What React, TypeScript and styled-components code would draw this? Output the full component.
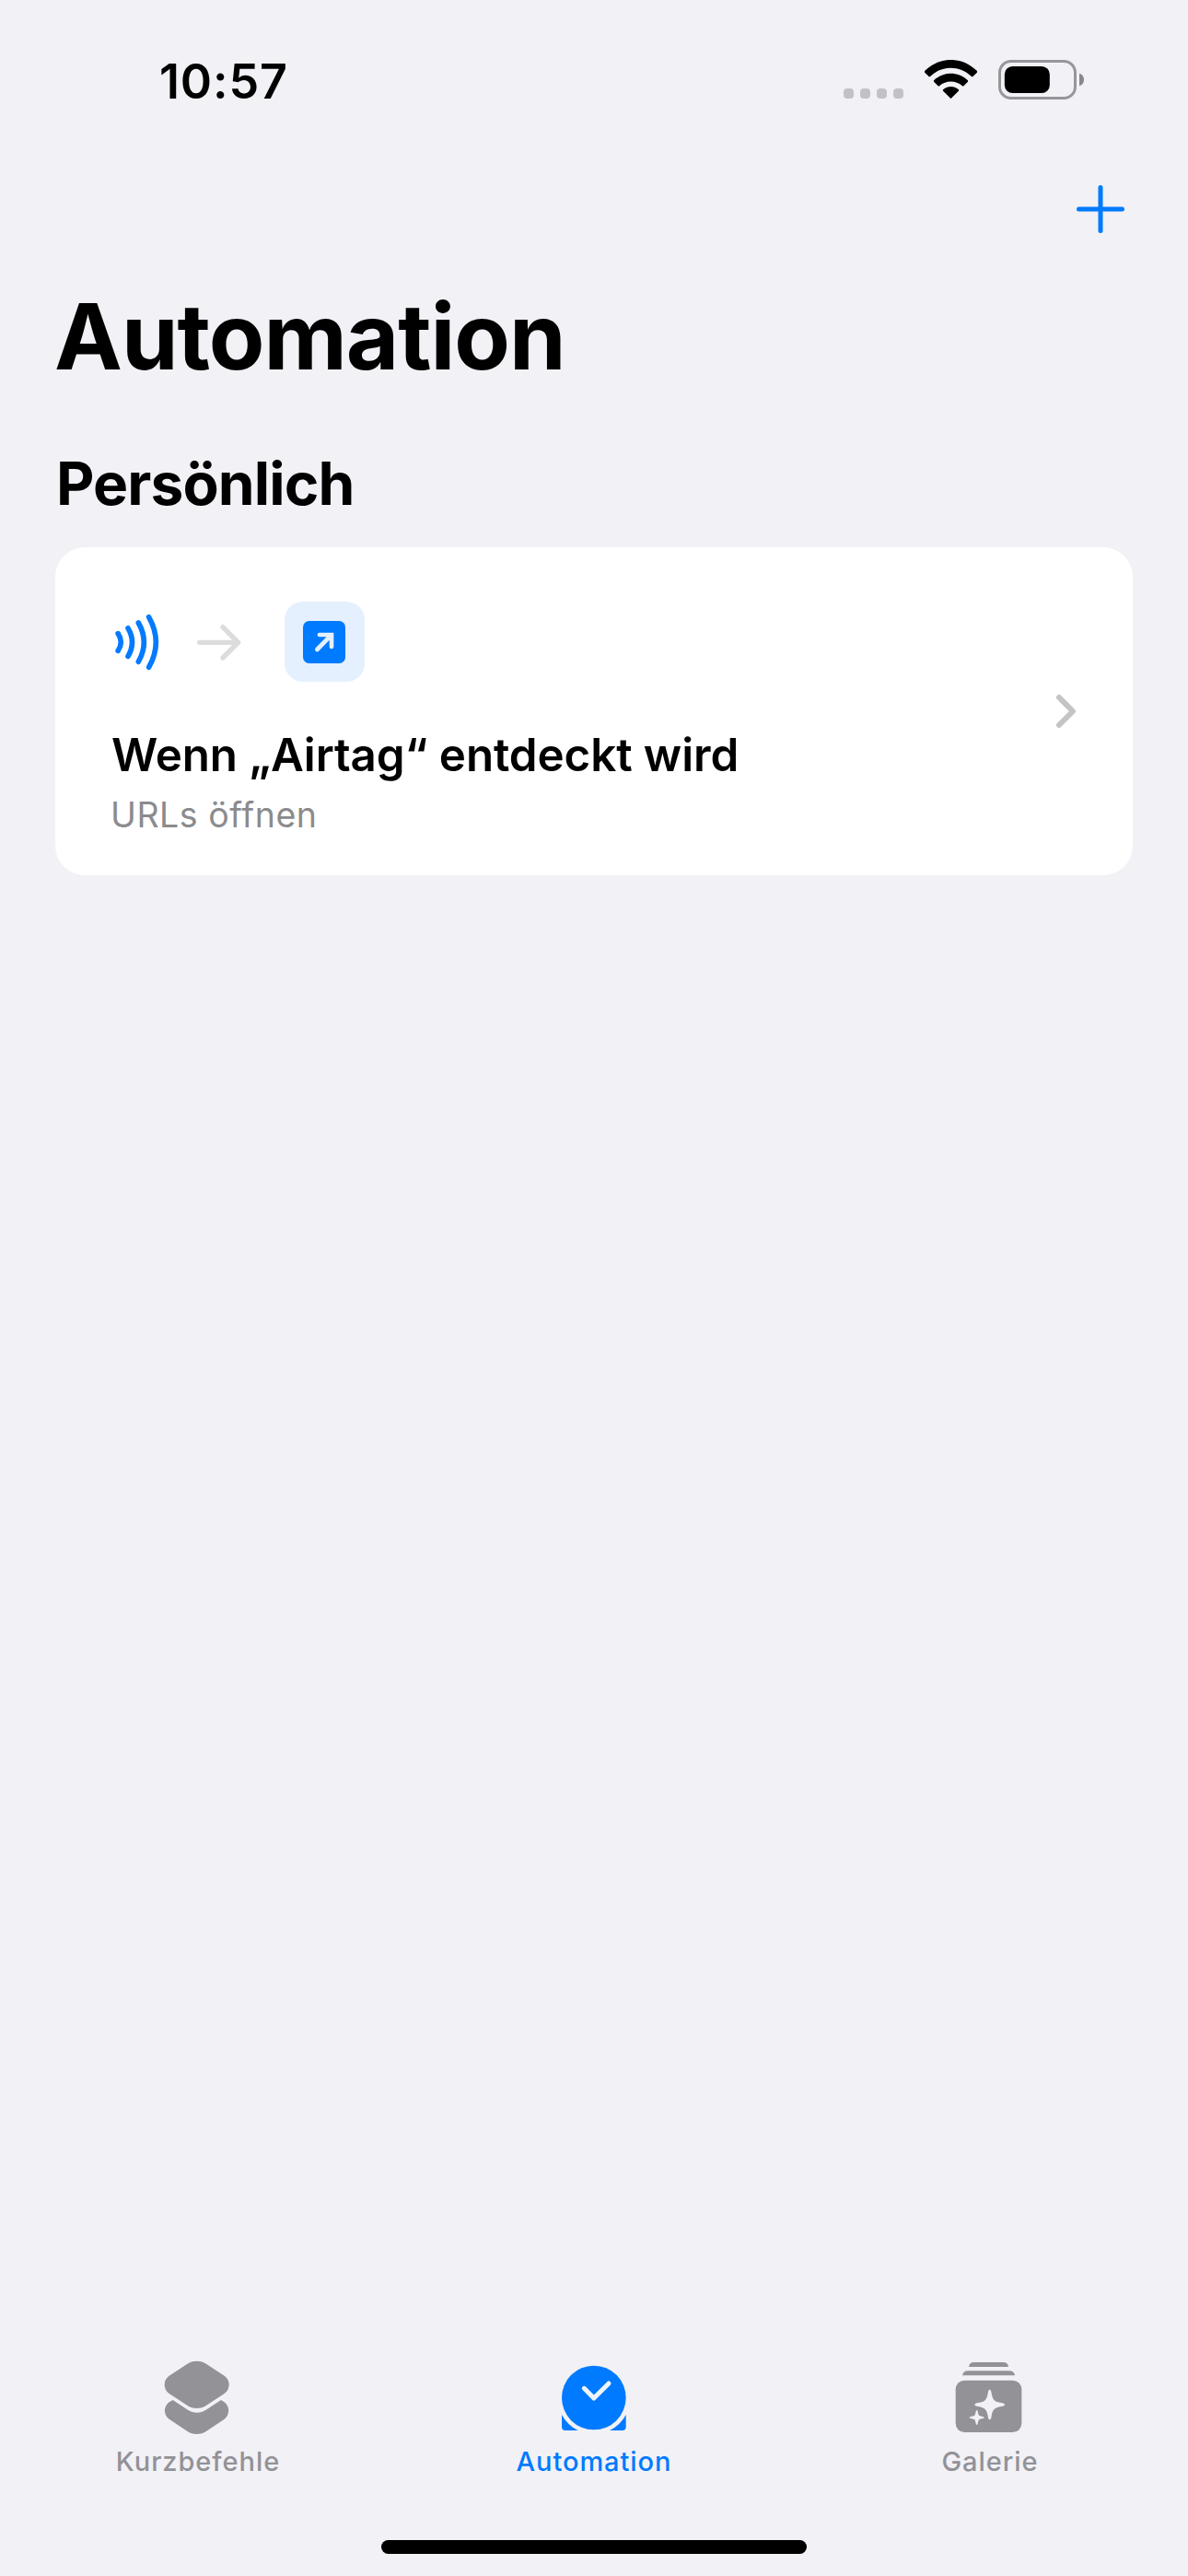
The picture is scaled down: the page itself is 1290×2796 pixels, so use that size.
import React from "react";
import styled, { createGlobalStyle } from "styled-components";

const BLUE = "#007aff";
const GRAY = "#929297";
const BG = "#f1f1f6";

const GlobalStyle = createGlobalStyle`
  * { box-sizing: border-box; }
  body {
    margin: 0;
    background: ${BG};
    font-family: Inter, "Liberation Sans", sans-serif;
    color: #000;
  }
  svg { display: block; }
`;

const Screen = styled.div`
  display: flex;
  flex-direction: column;
  width: 1290px;
  height: 2796px;
  background: ${BG};
`;

const StatusBar = styled.header`
  display: flex;
  align-items: center;
  justify-content: space-between;
  height: 173px;
  padding: 0 113px 0 173px;
`;

const Clock = styled.time`
  padding-top: 5px;
  font-size: 52px;
  line-height: 64px;
  font-weight: 600;
  letter-spacing: 0.85px;
`;

const StatusIcons = styled.div`
  display: flex;
  align-items: flex-end;
  gap: 23px;
  height: 43px;
`;

const SignalDots = styled.div`
  display: flex;
  gap: 7px;
  padding-bottom: 1px;
`;

const Dot = styled.span`
  width: 11px;
  height: 11px;
  border-radius: 4px;
  background: #c1c1c6;
`;

const WifiIcon = styled.svg`
  width: 57px;
  height: 42px;
  margin-bottom: 1px;
`;

const BatteryIcon = styled.svg`
  width: 93px;
  height: 43px;
`;

const NavBar = styled.nav`
  display: flex;
  align-items: center;
  justify-content: flex-end;
  height: 107px;
  padding-right: 69px;
`;

const AddButton = styled.button`
  padding: 0;
  border: 0;
  background: none;
`;

const Content = styled.main`
  flex: 1;
  padding: 25px 60px 0;
`;

const PageTitle = styled.h1`
  margin: 0 0 0 -1px;
  font-size: 99px;
  line-height: 120px;
  font-weight: 700;
  letter-spacing: -1.03px;
`;

const SectionTitle = styled.h2`
  margin: 61px 0 30px 1px;
  font-size: 64px;
  line-height: 78px;
  font-weight: 700;
  letter-spacing: -0.87px;
`;

const Card = styled.article`
  display: flex;
  align-items: center;
  justify-content: space-between;
  height: 356px;
  padding: 0 61px 0 60px;
  border-radius: 32px;
  background: #fff;
`;

const CardBody = styled.div`
  display: flex;
  flex-direction: column;
  padding-top: 17px;
`;

const FlowRow = styled.div`
  display: flex;
  align-items: center;
  height: 87px;
  margin-bottom: 48px;
`;

const FlowIcon = styled.svg`
  width: 189px;
  height: 87px;
`;

const ActionTile = styled.div`
  display: grid;
  place-items: center start;
  width: 87px;
  height: 87px;
  padding-left: 20px;
  border-radius: 20px;
  background: #e5f0fe;
`;

const CardTitle = styled.h3`
  margin: 0 0 11px 1px;
  font-size: 49.3px;
  line-height: 62px;
  font-weight: 600;
  letter-spacing: -0.08px;
`;

const CardSubtitle = styled.p`
  margin: 0 0 -1px;
  font-size: 37.5px;
  line-height: 48px;
  letter-spacing: 0.54px;
  color: #8b8b8d;
`;

const Chevron = styled.svg`
  width: 24px;
  height: 40px;
`;

const TabBar = styled.footer`
  display: grid;
  grid-template-columns: repeat(3, 1fr);
  height: 207px;
  padding-top: 10px;
`;

const Tab = styled.a<{ $active?: boolean }>`
  display: flex;
  flex-direction: column;
  align-items: center;
  gap: 10px;
  color: ${(p) => (p.$active ? BLUE : GRAY)};
`;

const TabIcon = styled.svg`
  width: 80px;
  height: 84px;
`;

const TabLabel = styled.span`
  font-size: 29px;
  line-height: 36px;
  font-weight: 450;
  letter-spacing: 0.95px;
`;

const HomeIndicator = styled.div`
  align-self: center;
  width: 462px;
  height: 15px;
  margin-bottom: 24px;
  border-radius: 8px;
  background: #000;
`;

export default function App() {
  return (
    <Screen>
      <GlobalStyle />
      <StatusBar>
        <Clock>10:57</Clock>
        <StatusIcons>
          <SignalDots>
            <Dot />
            <Dot />
            <Dot />
            <Dot />
          </SignalDots>
          <WifiIcon viewBox="342 75 171 126">
            <path d="M343 117Q340 113 343 110C392 63 462 63 512 110Q515 113 512 117L500 128Q497 131 494 128C456 92 398 92 361 128Q358 131 355 128Z" />
            <path d="M373 147Q370 144 373 141C404 112 450 112 482 141Q485 144 482 147L470 159Q467 162 464 159C444 141 411 141 391 159Q388 162 385 159Z" />
            <path d="M403 177Q400 174 403 171C417 159 438 159 452 171Q455 174 452 177L430 199Q427.5 202 425 199Z" />
          </WifiIcon>
          <BatteryIcon viewBox="582 75 279 129">
            <rect x="586.5" y="79.5" width="246" height="120" rx="37" fill="none" stroke="#97979b" strokeWidth="9" />
            <rect x="602.5" y="96" width="147" height="87" rx="26" />
            <path d="M846 119C856 122 861 130 861 139.5C861 149 856 157 846 160Z" fill="#88888b" />
          </BatteryIcon>
        </StatusIcons>
      </StatusBar>

      <NavBar>
        <AddButton aria-label="Hinzufügen">
          <svg width="52" height="52" viewBox="0 0 52 52" fill="none" stroke={BLUE} strokeWidth="5" strokeLinecap="round">
            <path d="M26 2.5V49.5M2.5 26H49.5" />
          </svg>
        </AddButton>
      </NavBar>

      <Content>
        <PageTitle>Automation</PageTitle>
        <SectionTitle>Persönlich</SectionTitle>
        <Card>
          <CardBody>
            <FlowRow>
              <FlowIcon viewBox="240 219 567 261" fill="none" strokeLinecap="round" strokeLinejoin="round">
                <g stroke="#047aff" strokeWidth="17">
                  <path d="M264.500 323Q283.500 351 264.500 379" />
                  <path d="M297 305.500Q324 351 297 397" />
                  <path d="M331 288Q367 351 331 414.500" />
                  <path d="M365 269.500Q411 351 365 432.500" />
                </g>
                <path d="M530 352H656M606 302L656 352L606 402" stroke="#dcdcdd" strokeWidth="16" />
              </FlowIcon>
              <ActionTile>
                <svg width="46" height="46" viewBox="867 282 138 138">
                  <rect x="867" y="282" width="138" height="138" rx="20" fill={BLUE} />
                  <path d="M913 375L959 328M921 327H960V366" fill="none" stroke="#e5f0fe" strokeWidth="14" strokeLinecap="round" strokeLinejoin="miter" />
                </svg>
              </ActionTile>
            </FlowRow>
            <CardTitle>Wenn „Airtag“ entdeckt wird</CardTitle>
            <CardSubtitle>URLs öffnen</CardSubtitle>
          </CardBody>
          <Chevron viewBox="0 0 24 40" fill="none" stroke="#c4c4c6" strokeWidth="6" strokeLinecap="round" strokeLinejoin="round">
            <path d="M5 5L20 20L5 35" />
          </Chevron>
        </Card>
      </Content>

      <TabBar>
        <Tab>
          <TabIcon viewBox="225 60 240 252" fill="currentColor">
            <path d="M314 75C331 66 351 66 368 75L431 116C451 129 451 160 431 174L368 215C351 224 331 224 314 215L251 174C231 160 231 129 251 116Z" />
            <path d="M263 195L312 227C331 239 351 239 371 227L420 195L431 202C449 216 449 243 431 257L368 299C351 308 331 308 314 299L251 257C232 243 232 216 251 202Z" />
          </TabIcon>
          <TabLabel>Kurzbefehle</TabLabel>
        </Tab>
        <Tab $active>
          <TabIcon viewBox="225 60 240 252" fill="currentColor">
            <circle cx="344.500" cy="187.500" r="104.500" />
            <path d="M240 243A118.500 118.500 0 0 0 293 294H252Q240 294 240 282Z" />
            <path d="M449 243A118.500 118.500 0 0 1 396 294H437Q449 294 449 282Z" />
            <path d="M313 157L344.500 189L393 141" fill="none" stroke="#eef4fd" strokeWidth="15" strokeLinecap="round" strokeLinejoin="round" />
          </TabIcon>
          <TabLabel>Automation</TabLabel>
        </Tab>
        <Tab>
          <TabIcon viewBox="225 60 240 252" fill="currentColor">
            <path d="M276 87C277 77 283 72 292 72H389C398 72 404 77 405 87Z" />
            <path d="M255 115C257 105 263 100 273 100H408C418 100 424 105 426 115Z" />
            <rect x="233" y="131" width="215" height="169" rx="29" />
            <g fill={BG}>
              <path d="M344 161C348 161 349 166 350 173C354 195 360 200 381 204C388 205 393 207 393 210C393 213 388 215 381 216C360 220 354 225 350 247C349 254 348 259 344 259C340 259 339 254 338 247C334 225 328 220 307 216C300 215 295 213 295 210C295 207 300 205 307 204C328 200 334 195 338 173C339 166 340 161 344 161Z" />
              <path d="M302 228C304 228 305 231 306 236C307 244 310 247 318 248C323 249 326 250 326 252C326 254 323 255 318 256C310 257 307 260 306 268C305 273 304 276 302 276C300 276 299 273 298 268C297 260 294 257 286 256C281 255 278 254 278 252C278 250 281 249 286 248C294 247 297 244 298 236C299 231 300 228 302 228Z" />
            </g>
          </TabIcon>
          <TabLabel>Galerie</TabLabel>
        </Tab>
      </TabBar>
      <HomeIndicator />
    </Screen>
  );
}
